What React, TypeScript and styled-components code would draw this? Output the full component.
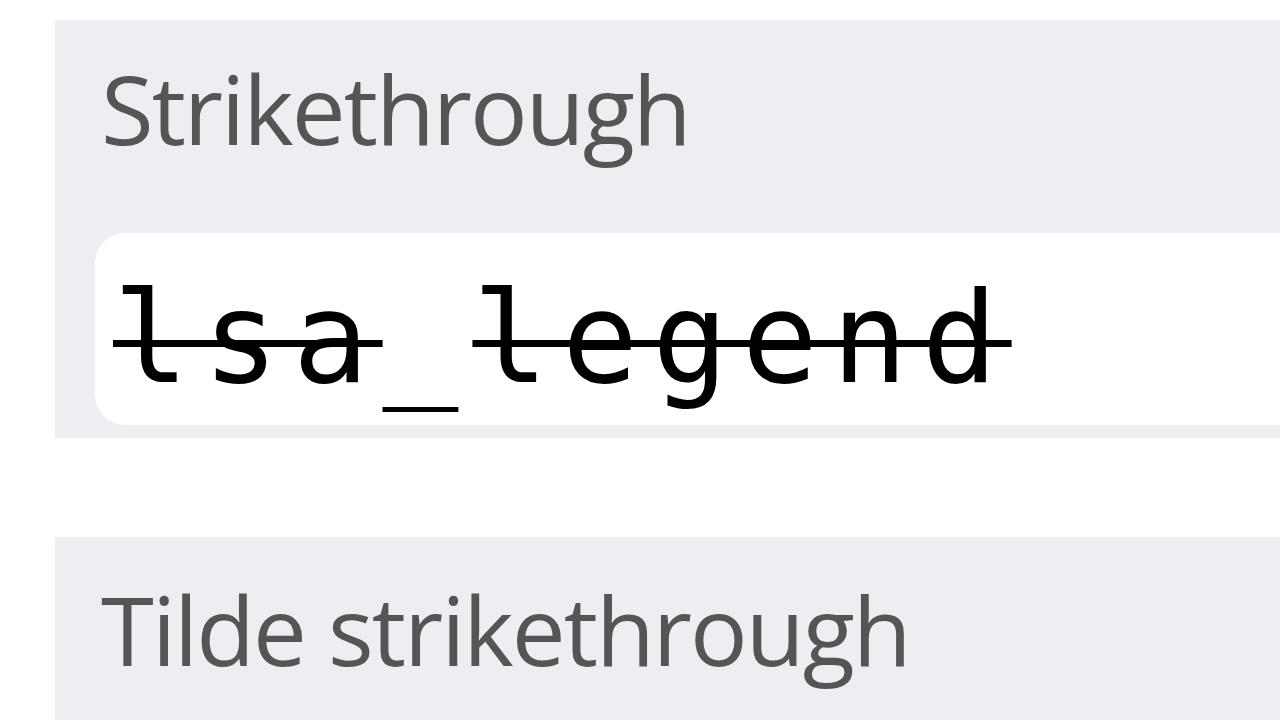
import React from "react";
import styled, { createGlobalStyle } from "styled-components";

const GlobalStyle = createGlobalStyle`
  html, body {
    margin: 0;
    padding: 0;
    background: #ffffff;
    overflow: hidden;
  }
`;

const Page = styled.div`
  width: 1280px;
  height: 720px;
  overflow: hidden;
  padding: 20px 0 0 55px;
  box-sizing: border-box;
  display: flex;
  flex-direction: column;
  gap: 99px;
`;

const Panel = styled.section`
  width: 1300px;
  background: #edeef2;
  padding: 0 0 13px 40px;
  box-sizing: border-box;
  display: flex;
  flex-direction: column;
`;

const Label = styled.div<{ $top: number }>`
  font-family: "Open Sans", "Noto Sans", sans-serif;
  font-size: 96px;
  line-height: 1;
  color: #555558;
  padding: ${(p) => p.$top}px 0 0 6px;
  height: 213px;
  box-sizing: border-box;
  letter-spacing: -2px;
  white-space: nowrap;
`;

const Field = styled.div`
  background: #ffffff;
  border-radius: 30px;
  height: 192px;
  display: flex;
  align-items: center;
  padding: 20px 0 0 18px;
  box-sizing: border-box;
`;

const Mono = styled.span`
  font-family: "DejaVu Sans Mono", "Liberation Mono", monospace;
  font-size: 126px;
  letter-spacing: 14px;
  color: #000000;
  white-space: pre;
  line-height: 1;
`;

const Struck = styled.span`
  text-decoration: line-through;
  text-decoration-thickness: 7px;
`;

export default function App() {
  return (
    <>
      <GlobalStyle />
      <Page>
        <Panel>
          <Label $top={40}>Strikethrough</Label>
          <Field>
            <Mono>
              <Struck>lsa</Struck>_<Struck>legend</Struck>
            </Mono>
          </Field>
        </Panel>
        <Panel>
          <Label $top={44}>Tilde strikethrough</Label>
        </Panel>
      </Page>
    </>
  );
}
